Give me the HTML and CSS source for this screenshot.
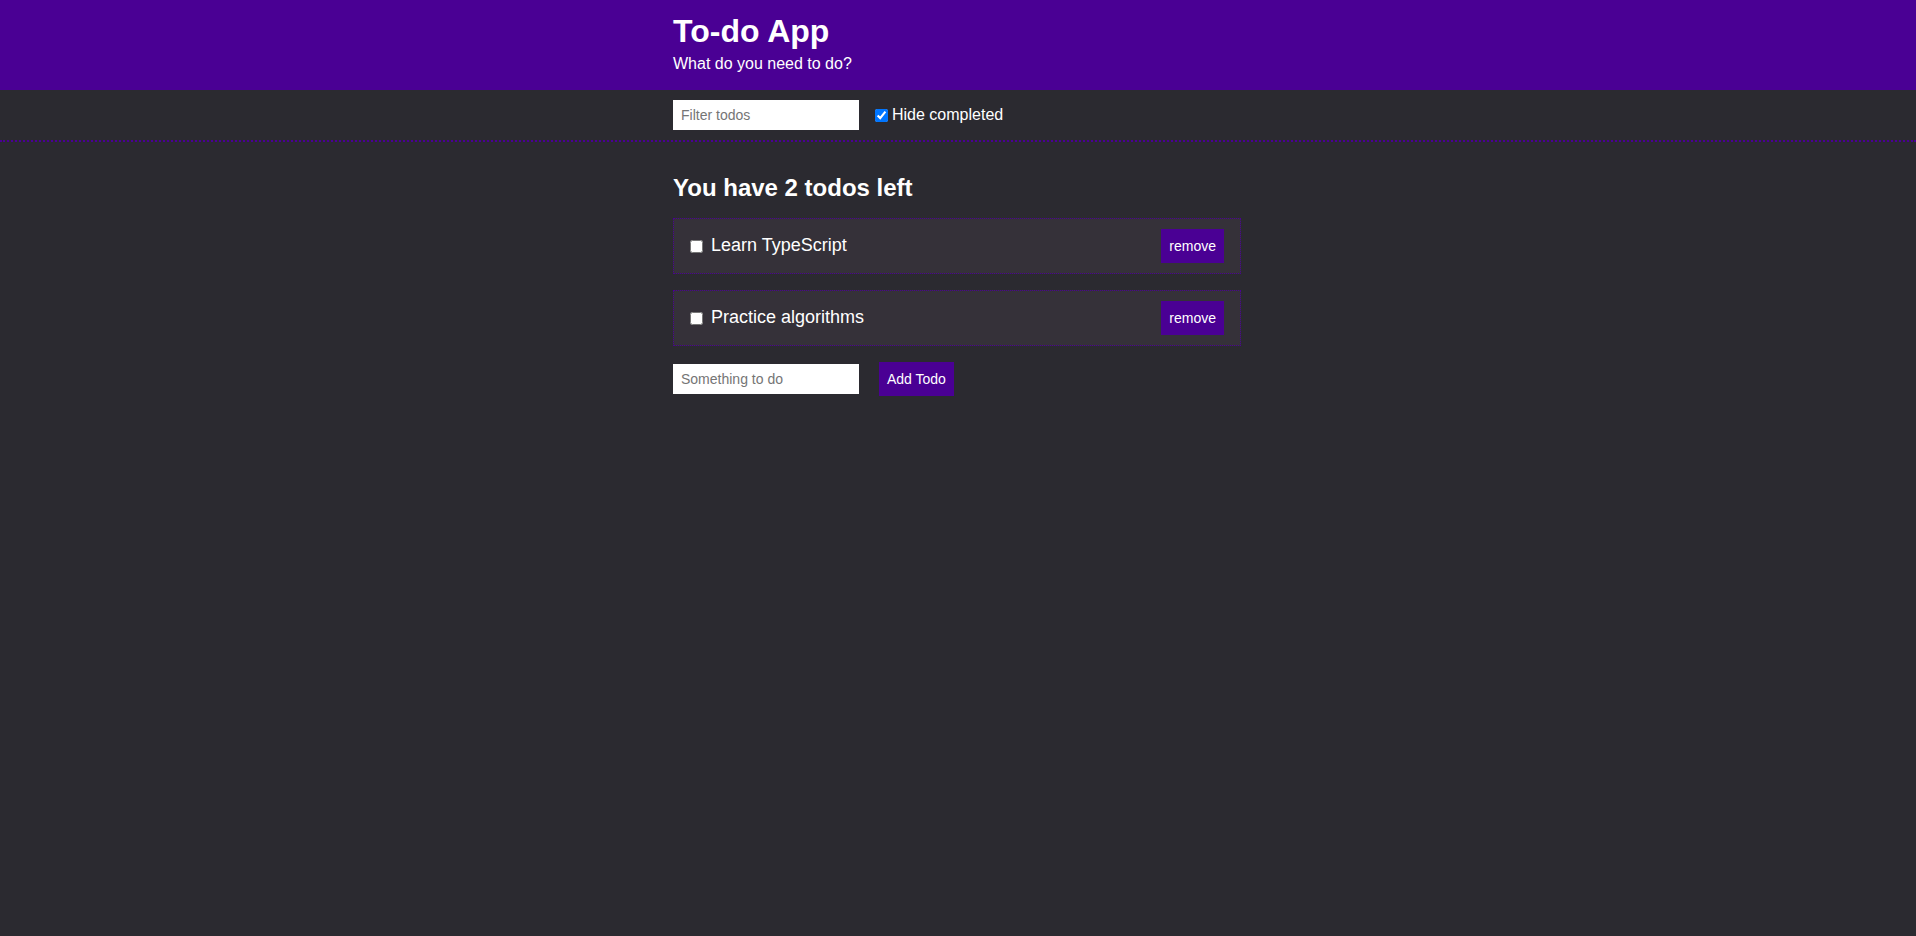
FILE: index.html
```html
<!DOCTYPE html>
<html lang="en">
<head>
<meta charset="utf-8">
<title>To-do App</title>
<link rel="stylesheet" href="styles.css">
</head>
<body>
<header class="app-header">
  <div class="container">
    <h1 class="app-title">To-do App</h1>
    <p class="app-subtitle">What do you need to do?</p>
  </div>
</header>
<div class="toolbar">
  <div class="container toolbar-row">
    <input class="text-input" type="text" placeholder="Filter todos">
    <label class="hide-label"><input class="hide-check" type="checkbox" checked>Hide completed</label>
  </div>
</div>
<main class="container main">
  <h2 class="summary">You have 2 todos left</h2>
  <ul class="todo-list">
    <li class="todo-item">
      <input class="todo-check" type="checkbox">
      <span class="todo-text">Learn TypeScript</span>
      <button class="btn btn-remove" type="button">remove</button>
    </li>
    <li class="todo-item">
      <input class="todo-check" type="checkbox">
      <span class="todo-text">Practice algorithms</span>
      <button class="btn btn-remove" type="button">remove</button>
    </li>
  </ul>
  <form class="add-form">
    <input class="text-input" type="text" placeholder="Something to do">
    <button class="btn" type="button">Add Todo</button>
  </form>
</main>
</body>
</html>
```
FILE: styles.css
```css
html, body {
  margin: 0;
  padding: 0;
}
body {
  background: #2b2a30;
  color: #ffffff;
  font-family: "Liberation Sans", Arial, sans-serif;
  min-height: 100vh;
}
.container {
  width: 570px;
  margin: 0 auto;
}
.app-header {
  background: #4a0094;
  padding: 13px 0 17px;
}
.app-title {
  margin: 0 0 5px;
  font-size: 32px;
  line-height: 37px;
  font-weight: bold;
}
.app-subtitle {
  margin: 0;
  font-size: 16px;
  line-height: 18px;
}
.toolbar {
  padding: 10px 0;
  border-bottom: 2px dotted #4a0094;
}
.toolbar-row {
  display: flex;
  align-items: center;
}
.text-input {
  box-sizing: border-box;
  width: 186px;
  height: 30px;
  border: none;
  outline: none;
  padding: 0 8px;
  margin: 0;
  background: #ffffff;
  color: #222;
  font-family: "Liberation Sans", Arial, sans-serif;
  font-size: 14px;
}
.text-input::placeholder {
  color: #757575;
}
.hide-label {
  display: flex;
  align-items: center;
  font-size: 16px;
  line-height: 18px;
}
.hide-check {
  width: 13px;
  height: 13px;
  margin: 0 4px 0 16px;
}
.main {
  padding-top: 32px;
}
.summary {
  margin: 0 0 16px;
  font-size: 24px;
  line-height: 28px;
  font-weight: bold;
}
.todo-list {
  list-style: none;
  width: 568px;
  margin: 0;
  padding: 0;
  display: flex;
  flex-direction: column;
  gap: 16px;
}
.todo-item {
  display: flex;
  align-items: center;
  background: #353139;
  border: 1px dotted #4a0094;
  padding: 10px 16px;
}
.todo-check {
  width: 13px;
  height: 13px;
  margin: 0 8px 0 0;
}
.todo-text {
  font-size: 18px;
  line-height: 21px;
  margin-top: -1px;
}
.btn {
  background: #4a0094;
  color: #ffffff;
  border: none;
  padding: 0 8px;
  height: 34px;
  font-family: "Liberation Sans", Arial, sans-serif;
  font-size: 14px;
  cursor: pointer;
}
.btn-remove {
  margin-left: auto;
}
.add-form {
  display: flex;
  align-items: center;
  gap: 20px;
  margin: 16px 0 0;
}
```
